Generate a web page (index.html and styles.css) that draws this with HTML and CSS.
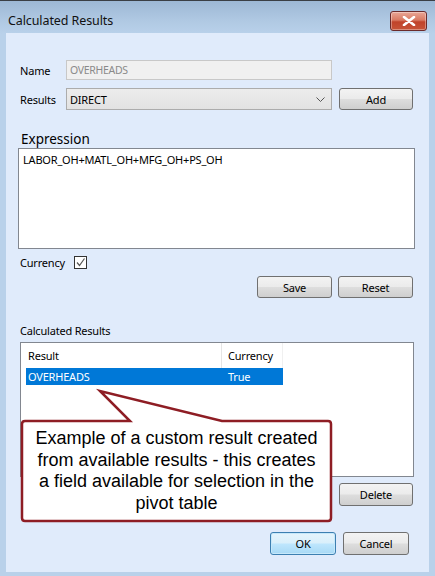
FILE: index.html
```html
<!DOCTYPE html>
<html>
<head>
<meta charset="utf-8">
<link rel="stylesheet" href="styles.css">
</head>
<body>
<div class="window">
  <div class="titlebar">
    <span class="title">Calculated Results</span>
    <div class="close"><svg width="16" height="10" viewBox="0 0 16 10"><path d="M3 1 L13 9 M13 1 L3 9" stroke="#fff" stroke-width="2.6" stroke-linecap="round"/></svg></div>
  </div>
  <div class="client">
    <div class="row name-row">
      <span class="label">Name</span>
      <div class="input disabled">OVERHEADS</div>
    </div>
    <div class="row results-row">
      <span class="label">Results</span>
      <div class="select">DIRECT<svg class="chev" width="9" height="5" viewBox="0 0 9 5"><path d="M0.5 0.5 L4.5 4.5 L8.5 0.5" fill="none" stroke="#555" stroke-width="1"/></svg></div>
      <div class="btn add">Add</div>
    </div>
    <div class="expr-label">Expression</div>
    <div class="textarea">LABOR_OH+MATL_OH+MFG_OH+PS_OH</div>
    <div class="row currency-row">
      <span class="label">Currency</span>
      <div class="checkbox"><svg width="11" height="11" viewBox="0 0 11 11"><path d="M2 5.5 L4.5 8.5 L9.5 1.5" fill="none" stroke="#555" stroke-width="1.2"/></svg></div>
    </div>
    <div class="btn-row save-row">
      <div class="btn">Save</div>
      <div class="btn">Reset</div>
    </div>
    <div class="list-label">Calculated Results</div>
    <div class="list">
      <div class="list-head">
        <div class="col c1">Result</div>
        <div class="col c2">Currency</div>
      </div>
      <div class="list-row selected">
        <div class="col c1">OVERHEADS</div>
        <div class="col c2">True</div>
      </div>
    </div>
    <div class="btn-row delete-row">
      <div class="btn">Delete</div>
    </div>
    <div class="btn-row ok-row">
      <div class="btn ok">OK</div>
      <div class="btn">Cancel</div>
    </div>
    <svg class="callout-shape" width="316" height="138" viewBox="0 0 316 138">
      <path d="M5 33 L110 33 L80 3 L202 33 L308 33 Q311 33 311 36 L311 130 Q311 133 308 133 L5 133 Q2 133 2 130 L2 36 Q2 33 5 33 Z" fill="#fff" stroke="#8e1d24" stroke-width="2.5" stroke-linejoin="miter"/>
    </svg>
    <div class="callout-text">Example of a custom result created from available results - this creates a field available for selection in the pivot table</div>
  </div>
</div>
</body>
</html>
```
FILE: styles.css
```css
* { box-sizing: border-box; }
html, body { margin: 0; padding: 0; }
body { width: 435px; height: 576px; overflow: hidden; background: #b9d1ea; }
.window {
  width: 435px; height: 576px;
  display: flex; flex-direction: column;
  background: linear-gradient(#9db8d5 0px, #b0c9e3 20px, #b9d1ea 33px, #b9d1ea 100%);
  border-top: 1px solid #3a3f45;
  font-family: "Noto Sans", "Liberation Sans", sans-serif;
  font-size: 11px; letter-spacing: -0.2px; color: #000;
}
.titlebar {
  height: 32px; display: flex; align-items: flex-start; justify-content: space-between;
  padding: 0 8px 0 8px;
}
.title { font-size: 12.5px; letter-spacing: -0.1px; margin-top: 11px; color: #111; }
.close {
  margin-top: 10px; width: 37px; height: 20px;
  border: 1px solid #6b2b2b; border-radius: 3px;
  background: linear-gradient(#e9a797 0%, #d97a62 45%, #c0432a 55%, #c75438 100%);
  display: flex; align-items: center; justify-content: center;
  box-shadow: inset 0 0 0 1px rgba(255,255,255,0.35);
}
.client {
  position: relative;
  margin: 0 6px; height: 539px;
  background: #e0ebfb;
  padding: 27px 16px 0 14px;
}
.row { display: flex; align-items: center; }
.label { width: 46px; }
.input {
  width: 266px; height: 20px; border: 1px solid #c8c8c8; background: #f0f0f0;
  color: #8a8a8a; padding: 2px 0 0 3px; font-size: 10.5px; letter-spacing: -0.3px;
}
.results-row { margin-top: 8px; }
.select {
  position: relative; width: 266px; height: 22px; border: 1px solid #acacac;
  background: linear-gradient(#ececec, #e2e2e2); padding: 3px 0 0 3px;
}
.chev { position: absolute; right: 6px; top: 8px; }
.btn {
  width: 75px; height: 22px; border: 1px solid #707070; border-radius: 3px;
  background: linear-gradient(#f3f3f3 0%, #ebebeb 48%, #dddddd 52%, #cfcfcf 100%);
  display: flex; align-items: center; justify-content: center;
}
.add { margin-left: 7px; width: 74px; }
.expr-label { margin-top: 20px; font-size: 13.5px; letter-spacing: 0; padding-left: 1px; height: 18px; line-height: 18px; }
.textarea {
  margin-top: 0; margin-left: -2px; width: 397px; height: 101px;
  background: #fff; border: 1px solid #828790; padding: 3px 4px;
}
.currency-row { margin-top: 6px; height: 14px; }
.currency-row .label { width: 54px; }
.checkbox {
  width: 13px; height: 13px; border: 1px solid #333; background: #fff;
  display: flex; align-items: center; justify-content: center;
}
.btn-row { display: flex; justify-content: flex-end; gap: 6px; }
.save-row { margin-top: 7px; }
.list-label { margin-top: 25px; height: 16px; line-height: 16px; }
.list {
  margin-top: 3px; width: 394px; height: 135px; background: #fff;
  border: 1px solid #828790; padding: 0 0 0 5px;
}
.list-head { display: flex; height: 25px; }
.list-head .col { padding-top: 5px; }
.list-head .c1 { border-right: 1px solid #e5e5e5; }
.list-head .c2 { border-right: 1px solid #f0f0f0; }
.col { padding-left: 2px; }
.c1 { width: 196px; }
.c2 { width: 61px; padding-left: 6px; }
.list-row { display: flex; height: 17px; align-items: center; }
.list-row.selected { background: #0078d7; color: #fff; width: 257px; }
.delete-row { margin-top: 6px; }
.delete-row .btn { width: 74px; height: 23px; }
.ok-row { margin-top: 26px; padding-right: 4px; gap: 7px; }
.ok-row .btn { width: 66px; height: 23px; }
.btn.ok {
  border-color: #3c7fb1;
  background: linear-gradient(#e5f4fc 0%, #d9effb 48%, #bee6fd 52%, #a7d9f5 100%);
  box-shadow: inset 0 0 0 1px #c6e8fa;
}
.callout-shape { position: absolute; left: 14px; top: 355px; }
.callout-text {
  position: absolute; left: 25px; top: 389px; width: 291px; height: 98px;
  font-family: "Liberation Sans", Arial, sans-serif; font-size: 18px; letter-spacing: 0; line-height: 21.5px;
  text-align: center; color: #000; padding-top: 6px;
}
```
